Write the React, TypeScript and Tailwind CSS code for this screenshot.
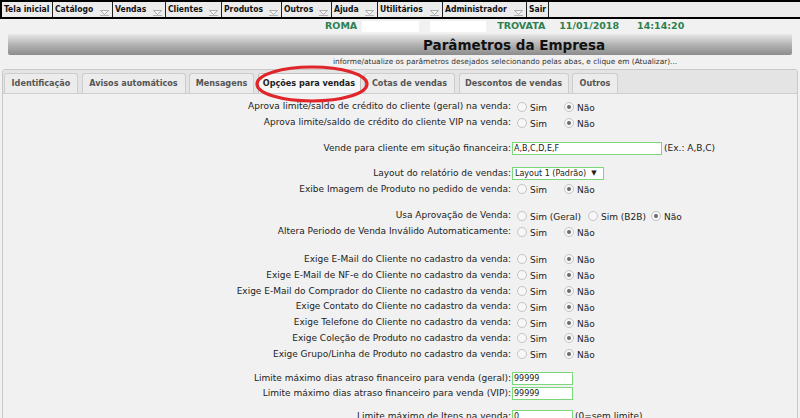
import React from "react";

const menu = [
  { label: "Tela inicial", arrow: false, w: "w-[51px]" },
  { label: "Catálogo", arrow: true, w: "w-[60px]" },
  { label: "Vendas", arrow: true, w: "w-[53px]" },
  { label: "Clientes", arrow: true, w: "w-[56px]" },
  { label: "Produtos", arrow: true, w: "w-[60px]" },
  { label: "Outros", arrow: true, w: "w-[50px]" },
  { label: "Ajuda", arrow: true, w: "w-[46px]" },
  { label: "Utilitários", arrow: true, w: "w-[65px]" },
  { label: "Administrador", arrow: true, w: "w-[84px]" },
  { label: "Sair", arrow: false, w: "w-[22px]" },
];

const tabs = [
  { label: "Identificação", w: "w-[74px]" },
  { label: "Avisos automáticos", w: "w-[104px]" },
  { label: "Mensagens", w: "w-[65px]" },
  { label: "Opções para vendas", w: "w-[103px]" },
  { label: "Cotas de vendas", w: "w-[91px]" },
  { label: "Descontos de vendas", w: "w-[110px]" },
  { label: "Outros", w: "w-[46px]" },
];

type Row =
  | { kind: "yn"; label: string }
  | { kind: "gap"; h: string }
  | { kind: "text"; label: string; value: string; w: string; hint?: string }
  | { kind: "select"; label: string; value: string }
  | { kind: "tri"; label: string };

const rows: Row[] = [
  { kind: "yn", label: "Aprova limite/saldo de crédito do cliente (geral) na venda:" },
  { kind: "yn", label: "Aprova limite/saldo de crédito do cliente VIP na venda:" },
  { kind: "gap", h: "h-[10px]" },
  { kind: "text", label: "Vende para cliente em situção financeira:", value: "A,B,C,D,E,F", w: "w-[150px]", hint: "(Ex.: A,B,C)" },
  { kind: "gap", h: "h-[9px]" },
  { kind: "select", label: "Layout do relatório de vendas:", value: "Layout 1 (Padrão)" },
  { kind: "yn", label: "Exibe Imagem de Produto no pedido de venda:" },
  { kind: "gap", h: "h-[11px]" },
  { kind: "tri", label: "Usa Aprovação de Venda:" },
  { kind: "yn", label: "Altera Periodo de Venda Inválido Automaticamente:" },
  { kind: "gap", h: "h-[12px]" },
  { kind: "yn", label: "Exige E-Mail do Cliente no cadastro da venda:" },
  { kind: "yn", label: "Exige E-Mail de NF-e do Cliente no cadastro da venda:" },
  { kind: "yn", label: "Exige E-Mail do Comprador do Cliente no cadastro da venda:" },
  { kind: "yn", label: "Exige Contato do Cliente no cadastro da venda:" },
  { kind: "yn", label: "Exige Telefone do Cliente no cadastro da venda:" },
  { kind: "yn", label: "Exige Coleção de Produto no cadastro da venda:" },
  { kind: "yn", label: "Exige Grupo/Linha de Produto no cadastro da venda:" },
  { kind: "gap", h: "h-[8px]" },
  { kind: "text", label: "Limite máximo dias atraso financeiro para venda (geral):", value: "99999", w: "w-[61px]" },
  { kind: "text", label: "Limite máximo dias atraso financeiro para venda (VIP):", value: "99999", w: "w-[61px]" },
  { kind: "gap", h: "h-[7px]" },
  { kind: "text", label: "Limite máximo de Itens na venda:", value: "0", w: "w-[61px]", hint: "(0=sem limite)" },
];

const condensed = { fontFamily: '"DejaVu Sans Condensed", "DejaVu Sans", sans-serif' };

function MenuArrow() {
  return (
    <svg width="9" height="6" viewBox="0 0 9 6" className="ml-auto mr-[3px] mt-[7px] shrink-0">
      <path d="M0.5 0.5 L8.5 0.5 L4.5 4.5 Z" fill="#f4f4f4" stroke="#9a9a9a" strokeWidth="0.8" />
      <line x1="0" y1="5.6" x2="9" y2="5.6" stroke="#9a9a9a" strokeWidth="0.8" />
    </svg>
  );
}

function Radio({ checked }: { checked?: boolean }) {
  return (
    <span className="inline-flex w-[10px] h-[10px] rounded-full border border-[#c4c4c4] bg-[#f7f7f7] items-center justify-center shrink-0">
      {checked && <span className="w-[4px] h-[4px] rounded-full bg-[#6a6a6a]" />}
    </span>
  );
}

function Opt({ label, checked, w }: { label: string; checked?: boolean; w: string }) {
  return (
    <span className={`flex items-center ${w}`}>
      <Radio checked={checked} />
      <span className="ml-[3px] mt-[3px]">{label}</span>
    </span>
  );
}

function FormRow({ row }: { row: Row }) {
  if (row.kind === "gap") return <div className={row.h} />;
  return (
    <div className="flex items-center h-[15.8px]">
      <div className="w-[509px] text-right pr-[1px] shrink-0 whitespace-nowrap">{row.label}</div>
      {row.kind === "yn" && (
        <div className="flex items-center pl-[5px]">
          <Opt label="Sim" w="w-[47px]" />
          <Opt label="Não" checked w="w-[40px]" />
        </div>
      )}
      {row.kind === "tri" && (
        <div className="flex items-center pl-[5px]">
          <Opt label="Sim (Geral)" w="w-[71px]" />
          <Opt label="Sim (B2B)" w="w-[63px]" />
          <Opt label="Não" checked w="w-[40px]" />
        </div>
      )}
      {row.kind === "text" && (
        <div className="flex items-center">
          <span className={`${row.w} h-[13px] border border-[#7ad77a] bg-white text-[8px] leading-[11px] pl-[1px] text-[#222]`}>
            {row.value}
          </span>
          {row.hint && <span className="ml-[2px]">{row.hint}</span>}
        </div>
      )}
      {row.kind === "select" && (
        <span className="flex items-center w-[92px] h-[13px] border border-[#7ad77a] bg-white text-[8px] pl-[2px] text-[#222]">
          {row.value}
          <span className="ml-[5px] text-[7px]">▼</span>
        </span>
      )}
    </div>
  );
}

export default function App() {
  return (
    <div
      className="w-[800px] h-[418px] overflow-hidden bg-[#f1f1f1] text-[#222]"
      style={{ fontFamily: '"DejaVu Sans", Tahoma, sans-serif' }}
    >
      {/* Menu bar */}
      <div className="flex h-[19px] border-y-2 border-black bg-[#ececec] border-l-2" style={condensed}>
        {menu.map((m) => (
          <div
            key={m.label}
            className={`${m.w} flex items-start pl-[2px] pt-[1px] border-r border-[#222] text-[8.5px] font-bold text-[#111] leading-[13px] whitespace-nowrap shrink-0 overflow-hidden`}
          >
            {m.label}
            {m.arrow && <MenuArrow />}
          </div>
        ))}
      </div>

      {/* Info row */}
      <div className="flex items-center h-[12px] mt-[1px] pl-[325px] text-[9.5px] font-bold text-[#2d8050] leading-[12px]">
        <span>ROMA</span>
        <span className="ml-[5px] w-[57px] h-[11px] bg-white" />
        <span className="ml-[11px] w-[56px] h-[11px] bg-white" />
        <span className="ml-[11px]">TROVATA</span>
        <span className="ml-[14px]">11/01/2018</span>
        <span className="ml-[18px]">14:14:20</span>
      </div>

      {/* Header */}
      <div className="mx-[8px] mt-[2px] h-[21px] rounded-[2px] bg-gradient-to-b from-[#e8e8e8] via-[#b4b4b4] to-[#8c8c8c] flex items-center pl-[415px]">
        <span className="text-[13.5px] font-bold text-[#111] mt-[1px]">Parâmetros da Empresa</span>
      </div>

      <div className="pl-[333px] mt-[1px] text-[7.4px] leading-[11px] text-[#333] whitespace-nowrap">
        informe/atualize os parâmetros desejados selecionando pelas abas, e clique em (Atualizar)...
      </div>

      {/* Tabs panel */}
      <div className="relative mx-[2px] mt-[2px] border border-[#c8c8c8] rounded-[3px] bg-[#f1f1f1]">
        <div className="flex items-end h-[24px] bg-[#e4e4e4] pl-[1px] gap-[3.5px] border-b border-[#cfcfcf] rounded-t-[3px]">
          {tabs.map((t, i) => (
            <div
              key={t.label}
              className={`${t.w} h-[20px] flex items-center justify-center border border-b-0 rounded-t-[3px] text-[9px] font-bold whitespace-nowrap ${
                i === 3 ? "bg-[#f7f7f7] border-[#c0c0c0] text-[#222]" : "bg-[#ececec] border-[#cdcdcd] text-[#555]"
              }`}
              style={condensed}
            >
              {t.label}
            </div>
          ))}
        </div>

        <svg className="absolute left-[251px] top-[-6px]" width="116" height="40" viewBox="0 0 116 40">
          <ellipse cx="58" cy="20" rx="55" ry="17" fill="none" stroke="#e0262b" strokeWidth="3.2" />
        </svg>

        <div className="pt-[5px] text-[9px] leading-[11px] text-[#222]">
          {rows.map((r, i) => (
            <FormRow key={i} row={r} />
          ))}
        </div>
      </div>
    </div>
  );
}
